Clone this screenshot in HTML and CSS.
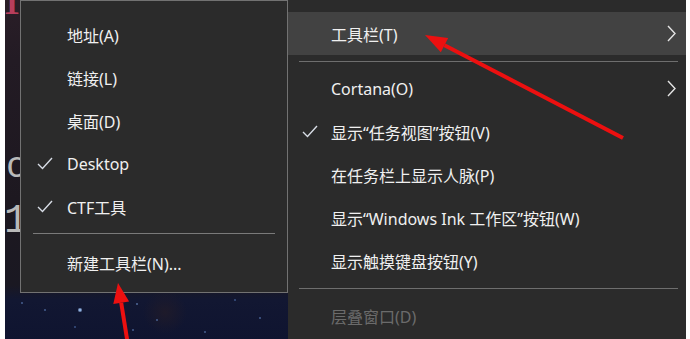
FILE: index.html
```html
<!DOCTYPE html>
<html>

<head>
    <meta charset="utf-8">
    <title>任务栏菜单</title>
    <link rel="stylesheet" href="styles.css">
</head>

<body>
    <div class="screen">
        <div class="edge">
            <span class="glyph glyph-top">1</span>
            <span class="glyph glyph-c">c</span>
            <span class="glyph glyph-one">1</span>
        </div>

        <ul class="menu submenu">
            <li class="item"><span class="mark"></span>地址(A)</li>
            <li class="item"><span class="mark"></span>链接(L)</li>
            <li class="item"><span class="mark"></span>桌面(D)</li>
            <li class="item">
                <span class="mark">
                    <svg class="check" viewBox="0 0 16 13"><polyline points="1,7 5.5,11.5 15,1"/></svg>
                </span>Desktop
            </li>
            <li class="item">
                <span class="mark">
                    <svg class="check" viewBox="0 0 16 13"><polyline points="1,7 5.5,11.5 15,1"/></svg>
                </span>CTF工具
            </li>
            <li class="sep"></li>
            <li class="item"><span class="mark"></span>新建工具栏(N)...</li>
        </ul>

        <ul class="menu main-menu">
            <li class="item active">
                <span><span class="mark"></span>工具栏(T)</span>
                <svg class="chevron" viewBox="0 0 9 17"><polyline points="1,1 8,8.5 1,16"/></svg>
            </li>
            <li class="sep"></li>
            <li class="item">
                <span><span class="mark"></span>Cortana(O)</span>
                <svg class="chevron" viewBox="0 0 9 17"><polyline points="1,1 8,8.5 1,16"/></svg>
            </li>
            <li class="item">
                <span>
                    <span class="mark">
                        <svg class="check" viewBox="0 0 16 13"><polyline points="1,7 5.5,11.5 15,1"/></svg>
                    </span>显示“任务视图”按钮(V)
                </span>
            </li>
            <li class="item"><span><span class="mark"></span>在任务栏上显示人脉(P)</span></li>
            <li class="item"><span><span class="mark"></span>显示“Windows Ink 工作区”按钮(W)</span></li>
            <li class="item"><span><span class="mark"></span>显示触摸键盘按钮(Y)</span></li>
            <li class="sep"></li>
            <li class="item disabled"><span><span class="mark"></span>层叠窗口(D)</span></li>
        </ul>

        <!-- red pointer arrows drawn over the screenshot -->
        <svg class="arrows" viewBox="0 0 681 339">
            <line x1="618" y1="138" x2="439.5" y2="45.2"/>
            <polygon points="420,35 443.2,38.1 435.8,52.3"/>
            <line x1="123" y1="345" x2="116.2" y2="302.8"/>
            <polygon points="113,283 124.1,301.5 108.3,304.1"/>
        </svg>
    </div>
</body>

</html>
```

FILE: styles.css
```css
body {
    margin: 0;
    background: #fff;
    font-family: "Noto Sans", "Noto Sans CJK SC", sans-serif;
}

.screen {
    position: relative;
    display: flex;
    align-items: flex-start;
    width: 681px;
    height: 339px;
    margin-left: 5px;
    overflow: hidden;
    background:
        radial-gradient(circle at 75px 310px, #8fb0e0 0, #8fb0e0 1px, transparent 2.5px),
        radial-gradient(circle at 17px 303px, #5b7bb5 0, transparent 1.5px),
        radial-gradient(circle at 40px 310px, #5b7bb5 0, transparent 1.5px),
        radial-gradient(circle at 132px 304px, #6a8cc4 0, transparent 1.5px),
        radial-gradient(circle at 152px 320px, #5b7bb5 0, transparent 1.5px),
        radial-gradient(circle at 128px 330px, #5b7bb5 0, transparent 1.5px),
        radial-gradient(circle at 255px 318px, #5b7bb5 0, transparent 1.5px),
        radial-gradient(circle at 230px 300px, #4a6aa5 0, transparent 1.5px),
        radial-gradient(circle at 200px 332px, #5b7bb5 0, transparent 1.5px),
        radial-gradient(circle at 70px 327px, #4a6aa5 0, transparent 1.5px),
        radial-gradient(circle at 160px 312px, #1e1a2a 0, transparent 22px),
        linear-gradient(to bottom, #2a1e27 0, #231b24 60px, #1d1820 200px, #1a1822 285px, #121732 300px, #0f1430 339px);
}

.edge {
    position: relative;
    flex: 0 0 15px;
    height: 339px;
    overflow: hidden;
}

.glyph {
    position: absolute;
    font-family: "Liberation Serif", serif;
    line-height: 1;
}

.glyph-top {
    top: -14px;
    left: -2px;
    font-size: 34px;
    font-weight: bold;
    color: #b83e5c;
}

.glyph-c {
    top: 150px;
    left: 1px;
    font-family: "Liberation Mono", monospace;
    font-size: 36px;
    color: #b9b9b9;
}

.glyph-one {
    top: 202px;
    left: -1px;
    font-family: "Liberation Mono", monospace;
    font-size: 40px;
    color: #b9b9b9;
}

.menu {
    margin: 0;
    list-style: none;
    background: #2b2b2b;
    color: #f0f0f0;
    font-size: 16px;
    box-sizing: border-box;
}

.submenu {
    flex: 0 0 268px;
    height: 293px;
    padding: 12px 0 0;
    border: 1px solid #727272;
}

.main-menu {
    flex: 0 0 398px;
    height: 339px;
    padding: 12px 0 0;
}

.item {
    display: flex;
    align-items: center;
    justify-content: space-between;
    height: 43px;
    white-space: nowrap;
}

.submenu .item {
    justify-content: flex-start;
    padding-left: 16px;
}

.main-menu .item {
    padding: 0 10px 0 14px;
}

.item > span {
    display: flex;
    align-items: center;
}

.mark {
    display: inline-flex;
    align-items: center;
    flex: 0 0 30px;
    width: 30px;
}

.main-menu .mark {
    flex-basis: 29px;
    width: 29px;
}

.active {
    background: #424242;
}

.disabled {
    color: #6b6b6b;
}

.sep {
    height: 1px;
    background: #7a7a7a;
}

.submenu .sep {
    margin: 5px 12px 7px;
}

.main-menu .sep {
    margin: 6px 8px 5px 11px;
    background: #6e6e6e;
}

.check {
    width: 16px;
    height: 13px;
    fill: none;
    stroke: #d8dde6;
    stroke-width: 1.4;
}

.chevron {
    width: 9px;
    height: 17px;
    fill: none;
    stroke: #e4e4e4;
    stroke-width: 1.4;
}

.arrows {
    position: absolute;
    top: 0;
    left: 0;
    width: 681px;
    height: 339px;
    pointer-events: none;
}

.arrows line {
    stroke: #ec1010;
    stroke-width: 4;
}

.arrows polygon {
    fill: #ec1010;
}
```
